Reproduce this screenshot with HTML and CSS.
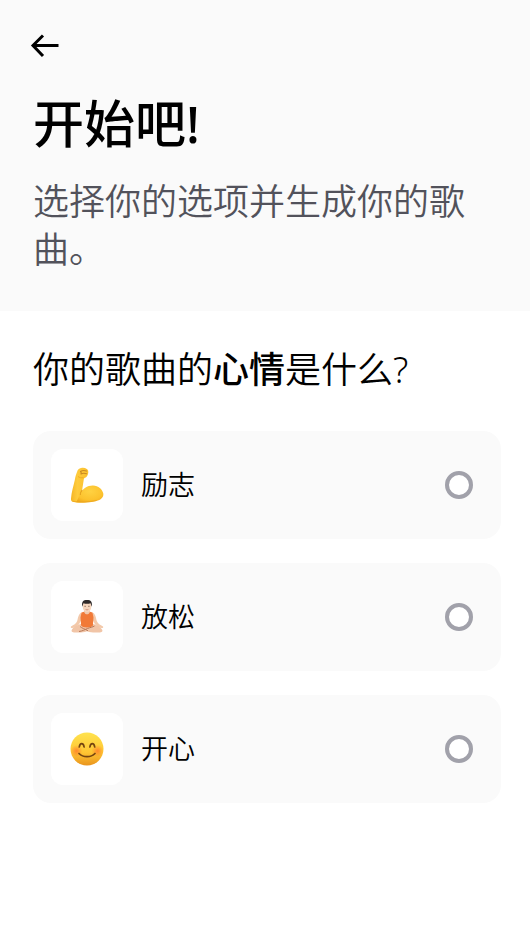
FILE: index.html
```html
<!DOCTYPE html>
<html lang="zh-CN">
<head>
    <meta charset="UTF-8">
    <meta name="viewport" content="width=device-width, initial-scale=1.0">
    <title>开始吧!</title>
    <link rel="stylesheet" href="styles.css">
</head>
<body>
    <header class="header">
        <button class="back" type="button" aria-label="返回">
            <svg viewBox="0 0 30 26" width="30" height="26" fill="none" stroke="#000" stroke-width="3"><path d="M28.500 12.500H3M13 2.500L3 12.500l10 10.500"/></svg>
        </button>
        <h1>开始吧!</h1>
        <p>选择你的选项并生成你的歌曲。</p>
    </header>
    <main>
        <form>
            <fieldset class="moods">
                <legend>你的歌曲的<b>心情</b>是什么?</legend>
                <label class="mood">
                    <span class="emoji">
                        <svg viewBox="-1 0 36 36" width="36" height="36">
                            <defs>
                                <linearGradient id="skin" x1="0" y1="0" x2="1" y2="0"><stop offset="0" stop-color="#f5b526"/><stop offset=".3" stop-color="#fecb3c"/><stop offset="1" stop-color="#f9bb28"/></linearGradient>
                                <radialGradient id="muscle" cx=".5" cy=".35" r=".7"><stop offset="0" stop-color="#ffd242"/><stop offset=".7" stop-color="#fcc22d"/><stop offset="1" stop-color="#f0a91c"/></radialGradient>
                            </defs>
                            <path fill="url(#skin)" d="M7 5C7.500 2.500 9.500 1 12 .7c1.800-.2 3.500.2 4.800 1.200 1.400 1 1.700 2.500 1.400 4.200-.3 2.200-1.200 3.900-3 4.600-1 .4-1.400 1-1.500 2.200L12 24l10 6-5 5c-5 .8-10 .8-14.500-.3-1.300-.4-1.600-1.400-1.500-3.200C1.500 25 3.500 19 4.800 13 5.300 10 6 7.500 7 5z"/>
                            <path fill="url(#muscle)" d="M10 27c2.500-5.500 7.500-8.600 13-8.500 5.500.1 9.300 3.700 10.300 8 .5 4-2.500 6.400-7 7.500-6 1.500-14 1.900-20 1.200z"/>
                            <path fill="none" stroke="#df9a1a" stroke-width="1" stroke-linecap="round" d="M10.300 27.500c.1-1.800.7-3 1.800-4.300"/>
                            <path fill="none" stroke="#c98a22" stroke-width="1.100" stroke-linecap="round" d="M10.500 4.500c1.700-1.100 3.700-1.200 6-.5M11 7c1.700-1 3.500-1 5.500-.3M10.500 4.500c.8.700.9 1.700.5 2.500"/>
                            <path fill="none" stroke="#eca720" stroke-width=".8" d="M8 9.500c1.600 1.200 3.500 1.600 5.500 1.200M2.500 34.300c7 1.100 16 .8 24-.8"/>
                        </svg>
                    </span>
                    <span class="name">励志</span>
                    <input type="radio" name="mood" value="motivation">
                </label>
                <label class="mood">
                    <span class="emoji">
                        <svg viewBox="0 0 36 36" width="36" height="36">
                            <path fill="#f3c9aa" d="M12.500 13.500c-2.700 1-3.400 5-4.300 8.500-1 2.500-3.500 4-6.200 5.500-.6.800 0 1.500 1 1.500 2.800 0 5.800-1.700 7.200-4l3-6zM23.500 13.500c2.700 1 3.400 5 4.300 8.500 1 2.500 3.500 4 6.200 5.500.6.800 0 1.500-1 1.500-2.800 0-5.800-1.700-7.200-4l-3-6z"/>
                            <path fill="#f1c5a7" d="M12 25c-3 .8-7.500 3-9 5.500-1.200 1.800.2 3 3 3 5 .2 8 .2 12-1.200 4 1.400 7 1.400 12 1.200 2.800 0 4.200-1.200 3-3-1.500-2.500-6-4.700-9-5.500z"/>
                            <path fill="#f0c9ad" d="M15 11h6v5h-6z"/>
                            <path fill="#f17a38" d="M12.500 13.500l2.500-.7c1 3.400 5 3.400 6 0l2.500.7 1 5-.6 8c-1 2.500-10.800 2.500-11.800 0l-.6-8z"/>
                            <path fill="none" stroke="#ba7958" stroke-width="1" d="M10 32.500c3.500-.4 6-2 8.500-3 3-1.200 5-1.300 7-2.500M11 27.500c2 1.800 5 2.500 8 4.300"/>
                            <ellipse cx="18" cy="7.500" rx="4.300" ry="5.600" fill="#f7d6bd"/>
                            <path fill="#302a29" d="M13.200 7.500C12.500 2.800 14 1 18 1s5.500 1.800 4.800 6.500c-.8-.5-.5-2.200-1.300-3.300-2 .7-5 .7-7 0-.8 1.100-.5 2.800-1.300 3.300z"/>
                            <path fill="none" stroke="#80604e" stroke-width=".7" d="M15.300 7.300h1.700M19 7.300h1.700"/>
                            <path fill="none" stroke="#c57663" stroke-width=".7" d="M16.600 10.500q1.400.8 2.800 0"/>
                        </svg>
                    </span>
                    <span class="name">放松</span>
                    <input type="radio" name="mood" value="relax">
                </label>
                <label class="mood">
                    <span class="emoji">
                        <svg viewBox="0 0 36 36" width="36" height="36">
                            <defs>
                                <linearGradient id="face" x1="0" y1="0" x2="0" y2="1"><stop offset="0" stop-color="#ffe34f"/><stop offset=".6" stop-color="#ffc633"/><stop offset="1" stop-color="#e9941e"/></linearGradient>
                                <radialGradient id="blush"><stop offset="0" stop-color="#ff7429" stop-opacity=".75"/><stop offset="1" stop-color="#ff7429" stop-opacity="0"/></radialGradient>
                            </defs>
                            <circle cx="18" cy="18" r="16.500" fill="url(#face)"/>
                            <circle cx="7.500" cy="20" r="6" fill="url(#blush)"/>
                            <circle cx="28.500" cy="20" r="6" fill="url(#blush)"/>
                            <path fill="none" stroke="#754510" stroke-width="1.700" stroke-linecap="round" d="M10.300 16c.6-4.500 4.200-4.500 4.800 0M20.900 16c.6-4.500 4.200-4.500 4.800 0M10 22.500c4 4.200 12 4.200 16 0"/>
                        </svg>
                    </span>
                    <span class="name">开心</span>
                    <input type="radio" name="mood" value="happy">
                </label>
            </fieldset>
        </form>
    </main>
</body>
</html>
```
FILE: styles.css
```css
* { box-sizing: border-box; }
body { margin: 0; background: #fff; color: #000; font-family: "Noto Sans", "Noto Sans CJK SC", sans-serif; font-weight: 350; }

.header { background: #fafafa; padding: 33px 30px 37px; }
.back { display: block; border: none; background: none; padding: 0; cursor: pointer; }
.back svg { display: block; }
h1 { margin: 28px 3px 0; font-size: 51px; line-height: 72px; font-weight: 500; }
p { margin: 19px 3px 0; color: #52525b; font-size: 36px; line-height: 48px; }

main { padding: 35px 29px 36px 33px; }
.moods { display: flex; flex-direction: column; gap: 24px; border: none; margin: 0; padding: 0; }
legend { padding: 0; margin-bottom: 37px; font-size: 36px; line-height: 48px; }
legend b { font-weight: 500; }

.mood { display: flex; align-items: center; gap: 18px; padding: 18px 28px 18px 18px; background: #fafafa; border-radius: 18px; cursor: pointer; }
.emoji { display: flex; align-items: center; justify-content: center; width: 72px; height: 72px; background: #fff; border-radius: 12px; }
.name { flex: 1; font-size: 27px; line-height: 36px; }

.mood input { appearance: none; width: 28px; height: 28px; margin: 0; border: 4px solid #a1a1aa; border-radius: 50%; background: #fff; cursor: pointer; }
.mood input:checked { border-color: #000; }
```
